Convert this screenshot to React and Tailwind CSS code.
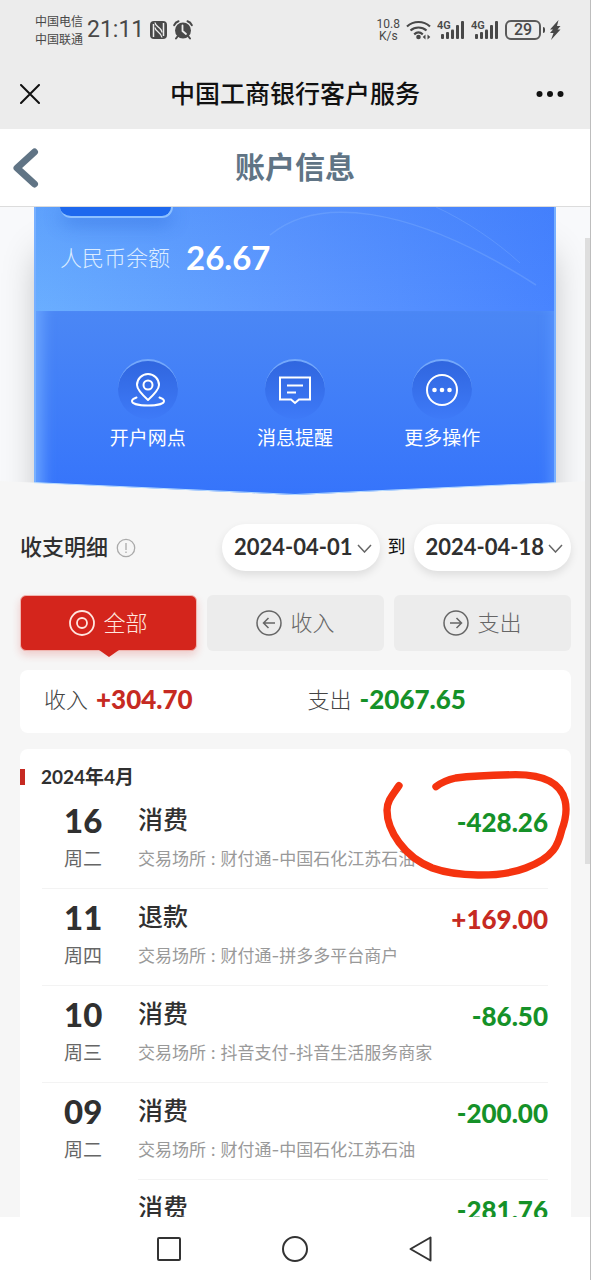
const QUICK_ACTIONS = [
  { id: "branch", label: "开户网点", icon: PinIcon },
  { id: "notify", label: "消息提醒", icon: MessageIcon },
  { id: "more", label: "更多操作", icon: MoreIcon },
]

const RECORDS = [
  { day: "16", week: "周二", title: "消费", place: "财付通-中国石化江苏石油", amount: "-428.26" },
  { day: "11", week: "周四", title: "退款", place: "财付通-拼多多平台商户", amount: "+169.00" },
  { day: "10", week: "周三", title: "消费", place: "抖音支付-抖音生活服务商家", amount: "-86.50" },
  { day: "09", week: "周二", title: "消费", place: "财付通-中国石化江苏石油", amount: "-200.00" },
  { day: "", week: "", title: "消费", place: "", amount: "-281.76" },
]

function PinIcon() {
  return (
    <svg viewBox="0 0 36 36" className="h-9 w-9" fill="none" stroke="currentColor" strokeWidth="2" strokeLinejoin="round" strokeLinecap="round">
      <path d="M18 28C12 22.500 7 17.500 7 13a11 11 0 0 1 22 0c0 4.500-5 9.500-11 15z" />
      <circle cx="18" cy="13" r="4.500" />
      <path d="M6.500 25.500C3.500 26.500 2 27.600 2 29c0 2.800 7 4.500 16 4.500S34 31.800 34 29c0-1.400-1.500-2.500-4.500-3.500" />
    </svg>
  )
}

function MessageIcon() {
  return (
    <svg viewBox="0 0 36 36" className="h-9 w-9" fill="none" stroke="currentColor" strokeWidth="2">
      <path d="M3 5.500h30v22H22l-4 3.500-4-3.500H3z" />
      <path d="M10 13.500h16M10 20.500h9" />
    </svg>
  )
}

function MoreIcon() {
  return (
    <svg viewBox="0 0 36 36" className="h-9 w-9">
      <circle cx="18" cy="18" r="15" fill="none" stroke="currentColor" strokeWidth="2" />
      <g fill="currentColor">
        <circle cx="10.500" cy="18" r="2.300" />
        <circle cx="18" cy="18" r="2.300" />
        <circle cx="25.500" cy="18" r="2.300" />
      </g>
    </svg>
  )
}

function SignalIcon() {
  return (
    <svg viewBox="0 0 28 22" className="h-[22px] w-7" fill="currentColor">
      <text x="0" y="10" fontSize="11" fontWeight="600" fontFamily="Roboto, sans-serif">
        4G
      </text>
      <rect x="4" y="15" width="3" height="5" rx="1" />
      <rect x="9" y="13" width="3" height="7" rx="1" />
      <rect x="14" y="10.500" width="3" height="9.500" rx="1" />
      <rect x="19" y="6" width="3" height="14" rx="1" />
      <rect x="24" y="2" width="3" height="18" rx="1" />
    </svg>
  )
}

function StatusBar() {
  return (
    <div className="flex h-[60px] items-center justify-between pr-[29px] pl-[35px] text-[#484848]">
      <div className="flex items-center">
        <div className="text-[12px] leading-[18px]">
          <p>中国电信</p>
          <p>中国联通</p>
        </div>
        <span className="ml-1 font-['Roboto',sans-serif] text-[23px] leading-7">21:11</span>
        <svg viewBox="0 0 17 18" className="ml-1.5 h-[18px] w-[17px]">
          <rect x="0" y="0" width="17" height="18" rx="4" fill="currentColor" />
          <path d="M3.500 3v13M13.500 2v13" stroke="#ececec" strokeWidth="1.500" />
          <path d="M5 1.500c0 4 7 5 7 10M5 6.500c0 4 6 4.500 7 10" fill="none" stroke="#ececec" strokeWidth="1.300" />
        </svg>
        <svg viewBox="0 0 20 20" className="ml-1.5 h-5 w-5" fill="none" stroke="currentColor" strokeLinecap="round">
          <circle cx="10" cy="10.500" r="8" fill="currentColor" stroke="none" />
          <path d="M1.200 5.200Q2.500 2 5.500 1.200M18.800 5.200Q17.500 2 14.500 1.200" strokeWidth="2" />
          <path d="M4.500 16.500l-1.500 2M15.500 16.500l1.500 2" strokeWidth="2" />
          <path d="M9.500 5.500v5.500l3.500 3" stroke="#ececec" strokeWidth="1.800" />
        </svg>
      </div>

      <div className="flex items-center">
        <div className="text-center font-['Roboto',sans-serif] text-[12px] leading-3">
          <p>10.8</p>
          <p>K/s</p>
        </div>
        <svg viewBox="0 0 25 20" className="ml-1.5 h-5 w-[25px]" fill="none" stroke="currentColor" strokeWidth="2.200">
          <path d="M1 6.500c6.500-6 16.500-6 23 0M4.500 10.500c4.500-4 11.500-4 16 0M8.200 14.300c2.500-2.200 6-2.200 8.600 0" />
          <circle cx="12.500" cy="17" r="2.300" fill="currentColor" stroke="none" />
          <path d="M19.500 14.500v5l-2.800-2.500zM21.500 14.500v5l2.800-2.500z" fill="currentColor" stroke="none" />
        </svg>
        <span className="ml-1.5">
          <SignalIcon />
        </span>
        <span className="ml-1.5">
          <SignalIcon />
        </span>
        <span className="ml-1.5 flex h-5 w-9 items-center justify-center rounded-md border-2 border-[#5a5a5a] font-['Roboto',sans-serif] text-[16px] leading-4 font-medium">
          29
        </span>
        <span className="ml-0.5 h-1.5 w-0.5 rounded-r bg-[#484848]" />
        <svg viewBox="0 0 12 20" className="ml-1 h-5 w-3" fill="currentColor">
          <path d="M9.500 0L1 9.500h3L1 13h3.500L2 20l9.500-10.500H8.500L11.500 6H8z" />
        </svg>
      </div>
    </div>
  )
}

function TitleBar() {
  return (
    <div className="flex h-[69px] items-center justify-between pr-6 pb-0.5 pl-5 text-[#111]">
      <button type="button" aria-label="关闭" className="w-9">
        <svg viewBox="0 0 20 20" className="h-5 w-5" fill="none" stroke="currentColor" strokeWidth="2" strokeLinecap="round">
          <path d="M1 1l18 18M19 1L1 19" />
        </svg>
      </button>
      <h1 className="pb-1 text-[25px] leading-8 font-medium">中国工商银行客户服务</h1>
      <button type="button" aria-label="更多" className="w-8">
        <svg viewBox="0 0 32 8" className="h-2 w-8" fill="currentColor">
          <circle cx="5.500" cy="4" r="3" />
          <circle cx="16" cy="4" r="3" />
          <circle cx="26.500" cy="4" r="3" />
        </svg>
      </button>
    </div>
  )
}

function Hero() {
  return (
    <section className="relative overflow-hidden bg-[#f8f9fb] px-[34px]">
      <div className="border-x-2 border-[#78b0ff] text-white shadow-[0_40px_36px_-8px_rgba(0,0,0,0.3)]">
        <div className="relative h-[104px] overflow-hidden bg-gradient-to-r from-[#6aaeff] via-[#5e98ff] to-[#4884ff]">
          <div className="absolute inset-0 bg-gradient-to-b from-[#2f6df0]/20 to-transparent" />
          <svg viewBox="0 0 518 104" preserveAspectRatio="none" className="absolute inset-0 h-full w-full" fill="none" stroke="#8ab8ff" strokeOpacity="0.3">
            <path d="M234 28C280 -10 370 -5 500 78" strokeWidth="1.500" />
            <path d="M400 0C430 14 460 34 484 56" />
          </svg>
          <div className="relative pl-6">
            <div className="h-[11px] w-[113px] rounded-b-xl border-r-2 border-b-2 border-[#8cc0ff] bg-[#1d68ee] shadow-[0_6px_18px_rgba(30,90,210,0.45)]" />
            <p className="flex items-center pt-[18px]">
              <span className="pb-0.5 text-[22px] leading-10 font-light text-[#dcecff]">人民币余额</span>
              <span className="ml-4 font-['Lato',sans-serif] text-[33px] leading-10 font-bold">26.67</span>
            </p>
          </div>
        </div>
        <div className="h-[184px] bg-gradient-to-b from-[#4b87f5] to-[#3674fb] px-[38px] pt-12 shadow-[inset_16px_0_14px_-10px_#6aa5ff,inset_-14px_0_14px_-12px_#5a96ff]">
          <ul className="grid grid-cols-3">
            {QUICK_ACTIONS.map(({ id, label, icon: Icon }) => (
              <li key={id}>
                <button type="button" className="flex w-full flex-col items-center">
                  <span className="flex h-[60px] w-[60px] items-center justify-center rounded-full border-t-2 border-[#74a8fb] bg-gradient-to-b from-[#3066df] to-[#3e7af8]">
                    <Icon />
                  </span>
                  <span className="mt-1 text-[19px] leading-7">{label}</span>
                </button>
              </li>
            ))}
          </ul>
        </div>
      </div>
      <svg viewBox="0 0 590 14" preserveAspectRatio="none" className="absolute bottom-0 left-0 h-3.5 w-full">
        <path d="M0 0L295 14L590 0V14H0z" fill="#f6f6f6" />
        <path d="M34 1.600L295 13.500L556 1.600" fill="none" stroke="#b8dcff" />
      </svg>
    </section>
  )
}

function DatePill({ value }) {
  return (
    <button
      type="button"
      className="flex h-[47px] items-center rounded-full bg-white pr-2 pb-0.5 pl-3 font-['Lato',sans-serif] text-[22px] font-bold text-[#303030] shadow-[0_4px_8px_rgba(0,0,0,0.1)]"
    >
      {value}
      <svg viewBox="0 0 15 9" className="mt-1 ml-1 h-[9px] w-[15px]" fill="none" stroke="#666" strokeWidth="1.500">
        <path d="M1 1l6.500 7L14 1" />
      </svg>
    </button>
  )
}

function FilterTabs() {
  return (
    <div className="mt-6 grid h-14 grid-cols-3 gap-2.5 text-[22px] font-light text-[#666]">
      <button type="button" className="relative flex items-center justify-center gap-2 rounded-md border border-[#f0b5b0] bg-[#d4251c] text-[#ffe6df] shadow-[0_4px_8px_rgba(212,37,28,0.2)]">
        <svg viewBox="0 0 26 26" className="h-[26px] w-[26px]" fill="none" stroke="currentColor" strokeWidth="1.800">
          <circle cx="13" cy="13" r="12" />
          <circle cx="13" cy="13" r="5" />
        </svg>
        <span className="pb-1">全部</span>
        <svg viewBox="0 0 20 8" className="absolute top-full left-1/2 h-2 w-5 -translate-x-1/2" fill="#d4251c">
          <path d="M0 0h20l-10 7z" />
        </svg>
      </button>
      <button type="button" className="flex items-center justify-center gap-2 rounded-md bg-[#ececec]">
        <svg viewBox="0 0 26 26" className="h-[26px] w-[26px]" fill="none" stroke="currentColor" strokeWidth="1.500">
          <circle cx="13" cy="13" r="12" />
          <path d="M19 13H8M12.500 8L7.500 13l5 5" />
        </svg>
        <span className="pb-1">收入</span>
      </button>
      <button type="button" className="flex items-center justify-center gap-2 rounded-md bg-[#ececec]">
        <svg viewBox="0 0 26 26" className="h-[26px] w-[26px]" fill="none" stroke="currentColor" strokeWidth="1.500">
          <circle cx="13" cy="13" r="12" />
          <path d="M7 13h11M13.500 8l5 5-5 5" />
        </svg>
        <span className="pb-1">支出</span>
      </button>
    </div>
  )
}

function RecordRow({ record }) {
  const isIncome = record.amount.startsWith("+")
  // rows of the same day share one date, the divider above them is shorter
  return (
    <li className="flex h-[97px] pl-[22px]">
      <div className={`w-[96px] shrink-0 pt-2 pl-[22px] ${record.day ? "border-t border-[#f3f3f3]" : ""}`}>
        <p className="font-['Lato',sans-serif] text-[33px] leading-10 font-black text-[#303030]">{record.day}</p>
        <p className="pt-0.5 text-[19px] leading-8 text-[#666]">{record.week}</p>
      </div>
      <div className="min-w-0 flex-1 border-t border-[#f3f3f3] pt-2">
        <div className="flex items-start justify-between">
          <h3 className="text-[25px] leading-9 font-medium text-[#303030]">{record.title}</h3>
          <span className={`pt-1 font-['Lato',sans-serif] text-[26px] leading-9 font-black ${isIncome ? "text-[#c62a22]" : "text-[#159128]"}`}>
            {record.amount}
          </span>
        </div>
        {record.place && (
          <p className="pt-[7px] font-['Inter','Noto_Sans_CJK_SC',sans-serif] text-[17px] leading-6 whitespace-nowrap text-[#999]">
            交易场所 : {record.place}
          </p>
        )}
      </div>
    </li>
  )
}

export default function App() {
  return (
    <div className="flex h-screen flex-col overflow-hidden border-r border-[#bdbdbd] bg-white font-['Noto_Sans_CJK_SC',sans-serif]">
      <header className="shrink-0">
        <div className="bg-[#ececec]">
          <StatusBar />
          <TitleBar />
        </div>
        <div className="flex h-[78px] items-center justify-between border-b border-[#dcdcdc] px-3 text-[#607485]">
          <button type="button" aria-label="返回" className="w-8">
            <svg viewBox="0 0 28 40" className="h-10 w-7" fill="none" stroke="currentColor" strokeWidth="7" strokeLinecap="round">
              <path d="M22.500 4L5 20l17.500 16" strokeLinejoin="round" />
            </svg>
          </button>
          <h2 className="pb-1.5 text-[30px] leading-10 font-bold">账户信息</h2>
          <span className="w-8" />
        </div>
      </header>

      <main className="relative min-h-0 flex-1 overflow-hidden bg-[#f6f6f6]">
        <Hero />
        <div className="pr-[19px] pl-5">
          <div className="flex items-center justify-between pt-[29px]">
            <h2 className="flex items-center pb-1 text-[22px] font-medium text-[#303030]">
              收支明细
              <svg viewBox="0 0 20 20" className="mt-1 ml-2 h-5 w-5" fill="none" stroke="#aaa" strokeWidth="1.300">
                <circle cx="10" cy="10" r="8.700" />
                <path d="M10 5v7M10 13.500v1.500" />
              </svg>
            </h2>
            <div className="flex items-center gap-2 text-[18px] text-[#111]">
              <DatePill value="2024-04-01" />
              <span className="pb-1">到</span>
              <DatePill value="2024-04-18" />
            </div>
          </div>

          <FilterTabs />

          <div className="mt-[19px] grid h-[63px] grid-cols-2 items-center rounded-lg bg-white px-6 pb-1 text-[22px] font-light text-[#444]">
            <p className="flex items-center gap-2">
              <span className="pb-0.5">收入</span>
              <span className="font-['Lato',sans-serif] text-[26px] font-black text-[#c62a22]">+304.70</span>
            </p>
            <p className="flex items-center gap-2 pl-3">
              <span className="pb-0.5">支出</span>
              <span className="font-['Lato',sans-serif] text-[26px] font-black text-[#159128]">-2067.65</span>
            </p>
          </div>

          <div className="relative mt-4 rounded-t-lg bg-white">
            <h3 className="flex items-center pt-4 pb-0.5 font-['Lato','Noto_Sans_CJK_SC',sans-serif] text-[19px] leading-6 font-bold text-[#303030]">
              <span className="mr-4 h-4 w-[5px] bg-[#c62a22]" />
              2024年4月
            </h3>
            <ul className="pr-[23px] [&>li:first-child>div]:border-transparent">
              {RECORDS.map((record, i) => (
                <RecordRow key={i} record={record} />
              ))}
            </ul>
            {/* hand-drawn marker around the first amount */}
            <svg viewBox="260 80 600 351" className="pointer-events-none absolute top-[18px] -right-2 h-[117px] w-[200px]" fill="none" stroke="#f5330f" strokeWidth="22" strokeLinecap="round" strokeLinejoin="round">
              <path d="M320 136C300 165 284 182 284 210C284 270 335 350 420 383C490 408 620 414 700 383C785 352 798 312 808 270C820 238 826 212 818 180C806 132 760 103 670 103C610 104 530 108 490 113C462 119 445 128 431 139" />
            </svg>
          </div>
        </div>
        <div className="absolute top-[31px] right-0 h-[62%] w-[5px] bg-[#dedede]" />
      </main>

      <nav className="flex h-[63px] shrink-0 items-center justify-center gap-[100px] text-[#333]">
        <button type="button" aria-label="最近任务">
          <svg viewBox="0 0 26 26" className="h-[26px] w-[26px]" fill="none" stroke="currentColor" strokeWidth="2">
            <rect x="2" y="2" width="22" height="22" rx="1" />
          </svg>
        </button>
        <button type="button" aria-label="主屏幕">
          <svg viewBox="0 0 26 26" className="h-[26px] w-[26px]" fill="none" stroke="currentColor" strokeWidth="2">
            <circle cx="13" cy="13" r="12" />
          </svg>
        </button>
        <button type="button" aria-label="返回上一页">
          <svg viewBox="0 0 26 26" className="h-[26px] w-[26px]" fill="none" stroke="currentColor" strokeWidth="2" strokeLinejoin="round">
            <path d="M22.500 1.500v23L2.500 13z" />
          </svg>
        </button>
      </nav>
    </div>
  )
}
